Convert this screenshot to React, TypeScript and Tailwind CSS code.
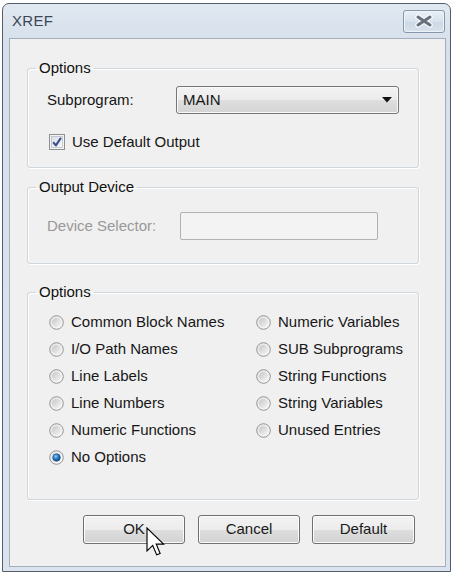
import React from 'react';

const leftOptions = [
  'Common Block Names',
  'I/O Path Names',
  'Line Labels',
  'Line Numbers',
  'Numeric Functions',
  'No Options',
];

const rightOptions = [
  'Numeric Variables',
  'SUB Subprograms',
  'String Functions',
  'String Variables',
  'Unused Entries',
];

// shared svg gradients for the radio / checkbox glyphs
function GlyphDefs() {
  return (
    <svg width="0" height="0" className="absolute">
      <defs>
        <linearGradient id="rb-outer" x1="0" y1="0" x2="1" y2="1">
          <stop offset="0" stopColor="#e2e2e2" />
          <stop offset="1" stopColor="#fbfbfb" />
        </linearGradient>
        <linearGradient id="rb-inner" x1="0" y1="0" x2="1" y2="1">
          <stop offset="0" stopColor="#c6c6c6" />
          <stop offset="1" stopColor="#f6f6f6" />
        </linearGradient>
        <radialGradient id="rb-dot" cx="0.4" cy="0.35" r="0.7">
          <stop offset="0" stopColor="#8fd0ff" />
          <stop offset="0.45" stopColor="#2a7fcf" />
          <stop offset="1" stopColor="#0d3f7c" />
        </radialGradient>
        <linearGradient id="cb-fill" x1="0" y1="0" x2="1" y2="1">
          <stop offset="0" stopColor="#d9dfe8" />
          <stop offset="1" stopColor="#f7f8fa" />
        </linearGradient>
      </defs>
    </svg>
  );
}

function Radio({ label, checked }: { label: string; checked?: boolean }) {
  return (
    <div className="flex items-center gap-[7px] h-[27px]">
      <svg width="15" height="15" viewBox="0 0 15 15" className="shrink-0">
        <circle cx="7.5" cy="7.5" r="6.8" fill="url(#rb-outer)" stroke="#8a8c8d" strokeWidth="0.9" />
        {checked ? (
          <circle cx="7.5" cy="7.5" r="3.8" fill="url(#rb-dot)" stroke="#18447a" strokeWidth="0.6" />
        ) : (
          <circle cx="7.5" cy="7.5" r="4.6" fill="url(#rb-inner)" />
        )}
      </svg>
      <span>{label}</span>
    </div>
  );
}

function GroupBox({ title, className, children }: { title: string; className?: string; children: React.ReactNode }) {
  return (
    <fieldset
      className={`ml-[17px] w-[392px] border border-[#cfd6dc] rounded-[3px] shadow-[inset_1px_1px_0_#fff,1px_1px_0_#fff] ${className ?? ''}`}
    >
      <legend className="ml-[8px] px-[3px] leading-[18px] text-[#111]">{title}</legend>
      {children}
    </fieldset>
  );
}

const buttonCls =
  'h-[29px] rounded-[3px] border border-[#707070] bg-[linear-gradient(#f3f3f3_0%,#ececec_50%,#dedede_51%,#d2d2d2_100%)] shadow-[inset_0_0_0_1px_#fbfbfb] text-[15px] text-[#1a1a1a] flex items-center justify-center';

export default function App() {
  return (
    <div className="w-[454px] h-[576px] bg-white font-['Liberation_Sans',Arial,sans-serif] text-[15px] text-[#161616] overflow-hidden">
      <GlyphDefs />
      <div className="relative ml-[2px] mt-[3px] w-[449px] h-[569px] border border-[#545e6a] rounded-t-[7px] bg-[linear-gradient(#e0e8f1,#d6e0eb_40px,#dbe4ee)] flex flex-col">
        {/* Title bar */}
        <div className="h-[34px] flex items-center justify-between pl-[9px] pr-[5px] shrink-0">
          <span className="text-[15px] text-[#3c4754] tracking-[0.3px]">XREF</span>
          <div className="w-[42px] h-[23px] rounded-[3px] border border-[#8796a8] bg-[linear-gradient(#e9eff6,#d7e1ec_50%,#ccd8e5_51%,#d8e2ed)] shadow-[inset_0_0_0_1px_#eef3f8] flex items-center justify-center">
            <svg width="20" height="14" viewBox="0 0 20 14">
              <path d="M4 3 L16 11 M16 3 L4 11" stroke="#f6f8fa" strokeWidth="5.6" strokeLinecap="round" />
              <path d="M4 3 L16 11 M16 3 L4 11" stroke="#67717d" strokeWidth="3" strokeLinecap="round" />
            </svg>
          </div>
        </div>

        {/* Client area */}
        <div className="flex-1 pl-[6px] pr-[4px] pb-[4px] flex">
          <div className="flex-1 border border-[#a3afbb] bg-[#f0f0f0] pt-[20px]">
            <GroupBox title="Options" className="pb-[17px]">
              <div className="mt-[9px] flex items-center h-[28px]">
                <span className="ml-[19px] w-[129px]">Subprogram:</span>
                <div className="w-[223px] h-[28px] rounded-[3px] border border-[#767676] bg-[linear-gradient(#f3f3f3_0%,#ececec_50%,#dedede_51%,#d4d4d4_100%)] shadow-[inset_0_0_0_1px_#fafafa] flex items-center justify-between pl-[6px] pr-[6px]">
                  <span>MAIN</span>
                  <svg width="10" height="6" viewBox="0 0 10 6">
                    <polygon points="0,0 10,0 5,5.5" fill="#111" />
                  </svg>
                </div>
              </div>
              <div className="mt-[20px] flex items-center h-[16px] ml-[21px] gap-[7px]">
                <svg width="16" height="16" viewBox="0 0 16 16" className="shrink-0">
                  <rect x="0.5" y="0.5" width="15" height="15" fill="#f4f4f4" stroke="#8e8f8f" />
                  <rect x="2.5" y="2.5" width="11" height="11" fill="url(#cb-fill)" stroke="#b3bac4" strokeWidth="0.7" />
                  <path d="M4.2 8.2 L6.9 11.4 L11.9 3.8" fill="none" stroke="#3c4f8e" strokeWidth="2.1" strokeLinejoin="round" />
                </svg>
                <span>Use Default Output</span>
              </div>
            </GroupBox>

            <GroupBox title="Output Device" className="mt-[10px] pb-[23px]">
              <div className="mt-[16px] flex items-center h-[28px]">
                <span className="ml-[19px] w-[133px] text-[#999]">Device Selector:</span>
                <div className="w-[198px] h-[28px] rounded-[2px] border border-[#b1b1b1] bg-[#f3f3f3]" />
              </div>
            </GroupBox>

            <GroupBox title="Options" className="mt-[19px] pb-[28px]">
              <div className="mt-[8px] ml-[21px] grid grid-cols-[207px_auto]">
                <div className="flex flex-col">
                  {leftOptions.map((o) => (
                    <Radio key={o} label={o} checked={o === 'No Options'} />
                  ))}
                </div>
                <div className="flex flex-col">
                  {rightOptions.map((o) => (
                    <Radio key={o} label={o} />
                  ))}
                </div>
              </div>
            </GroupBox>

            {/* Buttons */}
            <div className="mt-[15px] flex">
              <div className={`${buttonCls} ml-[73px] w-[102px]`}>OK</div>
              <div className={`${buttonCls} ml-[13px] w-[102px]`}>Cancel</div>
              <div className={`${buttonCls} ml-[12px] w-[103px]`}>Default</div>
            </div>
          </div>
        </div>

        {/* Mouse pointer over OK */}
        <svg
          width="20"
          height="31"
          viewBox="-0.7 -0.7 14 21.7"
          className="absolute left-[143px] top-[523px] pointer-events-none"
        >
          <path
            d="M0 0 L0 16 L4 12.2 L6.8 18.8 L9.2 17.8 L6.5 11.3 L11.6 11.3 Z"
            fill="#fff"
            stroke="#000"
            strokeWidth="0.8"
            strokeLinejoin="miter"
          />
        </svg>
      </div>
    </div>
  );
}
